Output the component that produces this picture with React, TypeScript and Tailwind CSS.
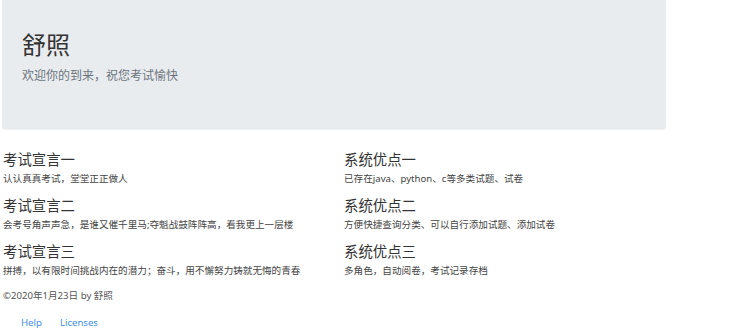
import React from "react"

const left = [
  { title: "考试宣言一", text: "认认真真考试，堂堂正正做人" },
  { title: "考试宣言二", text: "会考号角声声急，是谁又催千里马;夺魁战鼓阵阵高，看我更上一层楼" },
  { title: "考试宣言三", text: "拼搏，以有限时间挑战内在的潜力；奋斗，用不懈努力铸就无悔的青春" },
]

const right = [
  { title: "系统优点一", text: "已存在java、python、c等多类试题、试卷" },
  { title: "系统优点二", text: "方便快捷查询分类、可以自行添加试题、添加试卷" },
  { title: "系统优点三", text: "多角色，自动阅卷，考试记录存档" },
]

const Column = ({ items }: { items: { title: string; text: string }[] }) => (
  <div className="flex flex-col gap-[14px]">
    {items.map((e, i) => (
      <div key={i} className="flex flex-col">
        <h4 className="text-[14.4px] leading-[15px] text-[#333]">{e.title}</h4>
        <p className="mt-[7px] text-[9.6px] leading-[10px] text-[#444] whitespace-nowrap">{e.text}</p>
      </div>
    ))}
  </div>
)

const App = () => {
  return (
    <div
      className="w-[729px] h-[332px] bg-white overflow-hidden"
      style={{ fontFamily: '"Noto Sans", "Noto Sans CJK SC", sans-serif' }}
    >
      <div className="ml-[2px] w-[664px] h-[129px] bg-[#e9ecef] rounded-b-[3px] shadow-[0_1px_1px_rgba(0,0,0,0.06)] pl-[20px] pt-[33px]">
        <h1 className="text-[24px] leading-[24px] text-[#333]">舒照</h1>
        <p className="mt-[13px] text-[12px] leading-[12px] text-[#6c757d]">欢迎你的到来，祝您考试愉快</p>
      </div>

      <div className="mt-[23px] pl-[3px] grid grid-cols-[341px_341px]">
        <Column items={left} />
        <Column items={right} />
      </div>

      <p className="mt-[14px] pl-[3px] text-[9.6px] leading-[11px] text-[#555]">©2020年1月23日 by 舒照</p>

      <div className="mt-[17px] pl-[21px] flex gap-[18px] text-[9.6px] leading-[10px] text-[#3d8fe8]">
        <a href="#">Help</a>
        <a href="#">Licenses</a>
      </div>
    </div>
  )
}

export default App
